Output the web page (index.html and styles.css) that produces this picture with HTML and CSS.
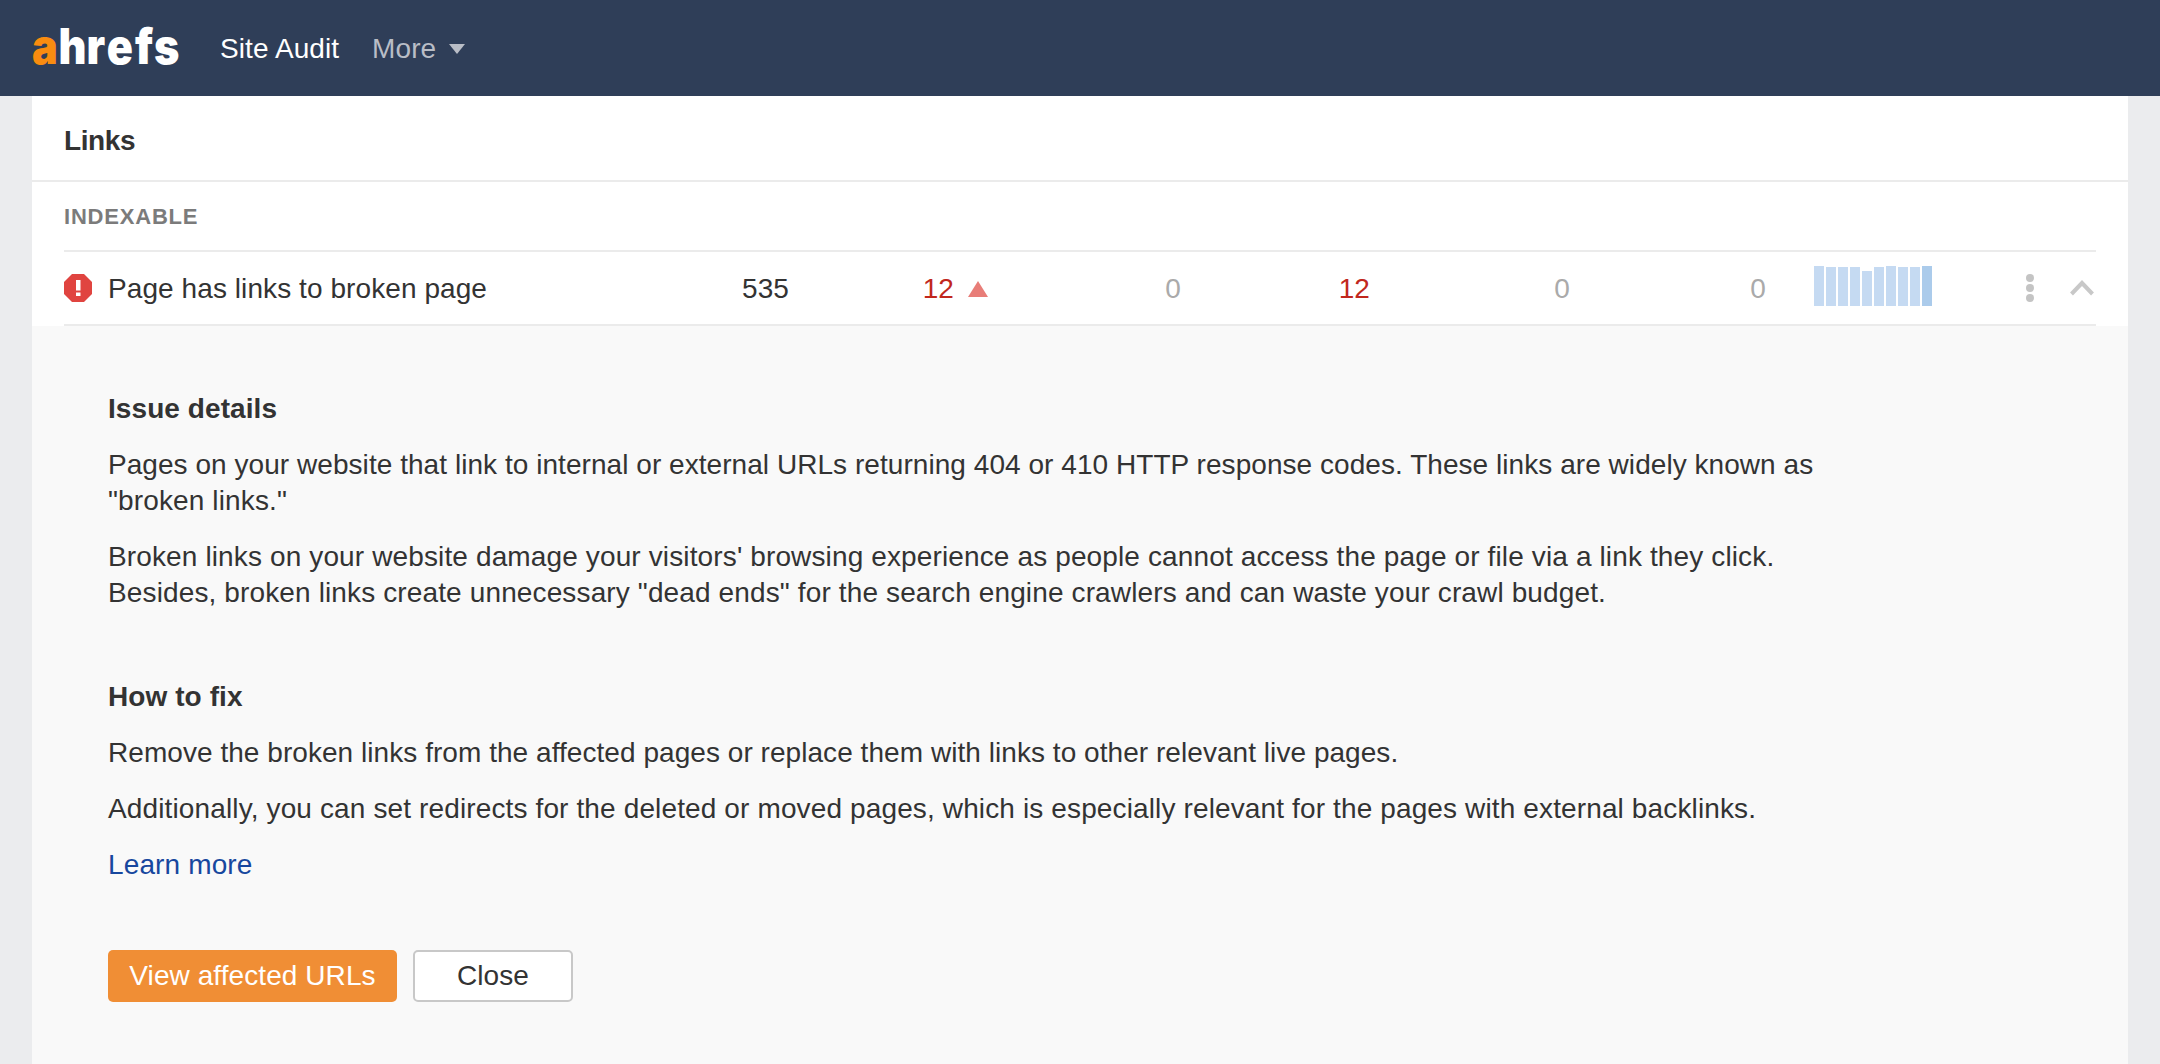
FILE: index.html
```html
<!DOCTYPE html>
<html lang="en">
<head>
<meta charset="utf-8">
<title>Site Audit</title>
<link rel="stylesheet" href="styles.css">
</head>
<body>
<header class="nav">
  <svg class="logo" width="150" height="72" viewBox="0 0 150 72" aria-label="ahrefs">
    <text class="logo-text" y="52" transform="scale(.88 1)"><tspan class="logo-a" x="0">a</tspan><tspan x="30">h</tspan><tspan x="62">r</tspan><tspan x="85">e</tspan><tspan x="117">f</tspan><tspan x="138.5">s</tspan></text>
  </svg>
  <a class="nav-link">Site Audit</a>
  <a class="nav-link nav-muted">More<span class="caret"></span></a>
</header>
<main class="card">
  <h2 class="card-title">Links</h2>
  <div class="section">
    <div class="section-label">INDEXABLE</div>
    <div class="row">
      <div class="row-name">
        <svg class="err" width="28" height="28" viewBox="0 0 28 28"><polygon points="8,0 20,0 28,8 28,20 20,28 8,28 0,20 0,8" fill="#e04440"/><rect x="12" y="6" width="4.5" height="10.5" fill="#fff"/><rect x="12" y="18.5" width="4.5" height="3.5" fill="#fff"/></svg>
        <span class="row-text">Page has links to broken page</span>
      </div>
      <div class="cell c1">535</div>
      <div class="cell c2 red">12<span class="up"></span></div>
      <div class="cell c3 grey">0</div>
      <div class="cell c4 red">12</div>
      <div class="cell c5 grey">0</div>
      <div class="cell c6 grey">0</div>
      <div class="spark">
        <i class="b40"></i><i class="b39"></i><i class="b39"></i><i class="b39"></i><i class="b35"></i><i class="b39"></i><i class="b40"></i><i class="b39"></i><i class="b39"></i><i class="b40 last"></i>
      </div>
      <div class="dots"><i></i><i></i><i></i></div>
      <svg class="chev" width="24" height="16" viewBox="0 0 24 16"><path d="M1.5 14 L12 3 L22.5 14" fill="none" stroke="#c8c8c8" stroke-width="4"/></svg>
    </div>
  </div>
  <section class="details">
    <h3 class="details-h">Issue details</h3>
    <p class="para"><span class="tight">Pages on your website that link to internal or external URLs returning 404 or 410 HTTP response codes. These links are widely known as</span><br>"broken links."</p>
    <p class="para">Broken links on your website damage your visitors' browsing experience as people cannot access the page or file via a link they click.<br>Besides, broken links create unnecessary "dead ends" for the search engine crawlers and can waste your crawl budget.</p>
    <h3 class="details-h second">How to fix</h3>
    <p class="para tight">Remove the broken links from the affected pages or replace them with links to other relevant live pages.</p>
    <p class="para">Additionally, you can set redirects for the deleted or moved pages, which is especially relevant for the pages with external backlinks.</p>
    <p class="para"><a class="learn">Learn more</a></p>
    <div class="actions">
      <button class="btn primary">View affected URLs</button>
      <button class="btn ghost">Close</button>
    </div>
  </section>
</main>
</body>
</html>
```
FILE: styles.css
```css
* { box-sizing: border-box; }
html, body { margin: 0; height: 100%; }
body {
  background: #ebecee;
  font-family: "Liberation Sans", Arial, sans-serif;
  font-size: 28px;
  letter-spacing: 0.08px;
  color: #333;
  overflow: hidden;
}
.nav {
  height: 96px;
  background: #2f3e58;
  display: flex;
  align-items: center;
  padding-left: 32px;
}
.logo { margin-right: 38px; flex: none; }
.logo-text { font-family: Inter, sans-serif; font-weight: 900; font-size: 49px; fill: #fff; }
.logo-a { fill: #f98c10; }
.nav-link { color: #fff; margin-right: 33px; padding-top: 2px; }
.nav-muted { color: #b9bdc6; display: flex; align-items: center; }
.caret {
  width: 0; height: 0; margin-left: 13px;
  border-left: 8px solid transparent;
  border-right: 8px solid transparent;
  border-top: 10px solid #b9bdc6;
}
.card { margin: 0 32px; background: #fff; height: 968px; display: flex; flex-direction: column; }
.card-title {
  margin: 0; height: 86px; padding: 5px 0 0 32px;
  display: flex; align-items: center;
  font-size: 28px; font-weight: 700; letter-spacing: -0.4px; color: #333;
  border-bottom: 2px solid #ebebeb;
}
.section { padding: 0 32px; }
.section-label {
  height: 70px; display: flex; align-items: center; padding-top: 2px;
  font-size: 22px; font-weight: 700; letter-spacing: 0.8px; color: #7b7b7b;
  border-bottom: 2px solid #ebebeb;
}
.row {
  height: 74px; display: flex; align-items: center;
  border-bottom: 2px solid #ebebeb;
}
.row-name { width: 637px; display: flex; align-items: center; gap: 16px; flex: none; }
.row-text { padding-top: 2px; }
.err { flex: none; }
.cell { flex: none; text-align: right; padding-top: 2px; }
.c1 { width: 88px; }
.c2 { width: 199px; display: flex; justify-content: flex-end; align-items: center; }
.c3 { width: 193px; }
.c4 { width: 189px; }
.c5 { width: 200px; }
.c6 { width: 196px; }
.red { color: #c1271d; }
.grey { color: #aaa; }
.up {
  width: 0; height: 0; margin-left: 14px;
  border-left: 10px solid transparent;
  border-right: 10px solid transparent;
  border-bottom: 16px solid #e87d78;
}
.spark { display: flex; align-items: flex-end; gap: 2px; height: 40px; margin: 0 0 4px 48px; flex: none; }
.spark i { width: 10px; background: #c5daf2; display: block; }
.spark .last { background: #abcbeb; }
.b40 { height: 40px; } .b39 { height: 39px; } .b35 { height: 35px; }
.dots { display: flex; flex-direction: column; gap: 2px; margin-left: 94px; flex: none; }
.dots i { width: 8px; height: 8px; border-radius: 50%; background: #c4c4c4; display: block; }
.chev { margin-left: 36px; flex: none; }
.details { flex: 1; background: #f9f9f9; padding: 1px 0 0 76px; }
.details-h { margin: 0; font-size: 28px; font-weight: 700; color: #333; line-height: 36px; padding-top: 64px; }
.details-h.second { padding-top: 68px; }
.para { margin: 20px 0 0; line-height: 36px; letter-spacing: 0.13px; }
.tight { letter-spacing: 0.05px; }
.learn { color: #17479e; }
.actions { display: flex; gap: 16px; margin-top: 67px; }
.btn { height: 52px; font: inherit; letter-spacing: inherit; border-radius: 5px; padding: 0; }
.primary { width: 289px; background: #f08e35; color: #fff; border: 0; }
.ghost { width: 160px; background: #fff; color: #333; border: 2px solid #c8c8c8; }
```
